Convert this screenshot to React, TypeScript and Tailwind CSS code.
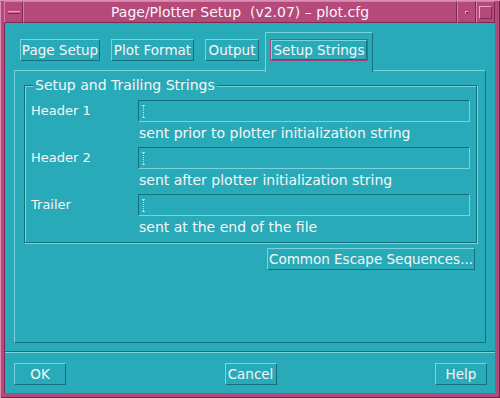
import React from "react";

const Bevel = ({ className = "", children }: { className?: string; children?: React.ReactNode }) => (
  <div
    className={`flex items-center justify-center border border-t-[#7ad4dd] border-l-[#7ad4dd] border-b-[#15707b] border-r-[#15707b] bg-[#29aab9] text-[13.5px] ${className}`}
  >
    {children}
  </div>
);

const Field = () => (
  <div className="flex h-[22px] items-center border border-t-[#15707b] border-l-[#15707b] border-b-[#7ad4dd] border-r-[#7ad4dd] bg-[#29aab9] pl-[3px]">
    <div className="flex flex-col items-center">
      <div className="h-[1px] w-[3px] bg-[#9fe0e6]" />
      <div className="h-[11px] w-0 border-l border-dotted border-[#b9eaee]" />
      <div className="h-[1px] w-[3px] bg-[#9fe0e6]" />
    </div>
  </div>
);

const rows = [
  { label: "Header 1", hint: "sent prior to plotter initialization string" },
  { label: "Header 2", hint: "sent after plotter initialization string" },
  { label: "Trailer", hint: "sent at the end of the file" },
];

export default function App() {
  return (
    <div className="flex h-[398px] w-[500px] flex-col bg-[#b5497a] pb-[5px] pl-[4px] pr-[5px] pt-[1px] font-['DejaVu_Sans',sans-serif] text-[13px] text-[#f6f6f6] shadow-[inset_1px_1px_0_#dc8fb3,inset_-1px_-1px_0_#6e2346]">
      {/* title bar */}
      <div className="flex h-[22px]">
        <div className="flex w-[19px] items-center justify-center border border-t-[#d680a8] border-l-[#d680a8] border-b-[#7d2a52] border-r-[#7d2a52]">
          <div className="h-[3px] w-[12px] border-t border-t-[#e6a6c4] border-b border-b-[#7d2a52] bg-[#c56690]" />
        </div>
        <div className="flex flex-1 items-center justify-center border border-t-[#d680a8] border-l-[#d680a8] border-b-[#7d2a52] border-r-[#7d2a52] text-[14px] whitespace-pre">
          Page/Plotter Setup  (v2.07) – plot.cfg
        </div>
        <div className="flex w-[19px] items-center justify-center border border-t-[#d680a8] border-l-[#d680a8] border-b-[#7d2a52] border-r-[#7d2a52]">
          <div className="h-[3px] w-[3px] border-t border-l border-t-[#e6a6c4] border-l-[#e6a6c4] bg-[#7d2a52]" />
        </div>
        <div className="flex w-[19px] items-center justify-center border border-t-[#d680a8] border-l-[#d680a8] border-b-[#7d2a52] border-r-[#7d2a52]">
          <div className="h-[13px] w-[13px] border border-t-[#e6a6c4] border-l-[#e6a6c4] border-b-[#7d2a52] border-r-[#7d2a52]" />
        </div>
      </div>

      {/* client area */}
      <div className="flex flex-1 flex-col border-l border-l-[#7d2a52] bg-[#29aab9]">
        {/* tabs */}
        <div className="ml-[15px] mt-[9px] flex h-[38px] items-start">
          <Bevel className="mt-[7px] h-[22px] w-[80px]">Page Setup</Bevel>
          <Bevel className="ml-[11px] mt-[7px] h-[22px] w-[83px]">Plot Format</Bevel>
          <Bevel className="ml-[11px] mt-[7px] h-[22px] w-[54px]">Output</Bevel>
          <div className="relative z-10 ml-[6px] h-[40px] w-[108px] border-l border-r border-t border-l-[#7ad4dd] border-t-[#7ad4dd] border-r-[#15707b] bg-[#29aab9] pl-[4px] pt-[6px]">
            <div className="h-[22px] w-[98px] border border-[#a8437a] bg-[#29aab9]">
              <Bevel className="h-full w-full">Setup Strings</Bevel>
            </div>
          </div>
        </div>

        {/* tab panel */}
        <div className="ml-[9px] flex h-[273px] w-[472px] flex-col border border-t-[#7ad4dd] border-l-[#7ad4dd] border-b-[#15707b] border-r-[#15707b]">
          <fieldset className="ml-[9px] mt-[6px] h-[166px] w-[452px] border border-[#15707b] px-[6px] shadow-[inset_1px_1px_0_#7ad4dd,1px_1px_0_#7ad4dd]">
            <legend className="ml-[2px] bg-[#29aab9] px-[2px] text-[14px] leading-[16px]">Setup and Trailing Strings</legend>
            <div className="mt-[7px] grid grid-cols-[107px_332px]">
              {rows.map((r) => (
                <React.Fragment key={r.label}>
                  <div className="flex h-[22px] items-center">{r.label}</div>
                  <Field />
                  <div />
                  <div className="h-[25px] pl-[1px] text-[14px] leading-[22px]">{r.hint}</div>
                </React.Fragment>
              ))}
            </div>
          </fieldset>
          <Bevel className="mr-[10px] mt-[5px] h-[22px] w-[208px] self-end">Common Escape Sequences...</Bevel>
        </div>

        {/* separator */}
        <div className="mt-[8px] h-[2px] border-t border-b border-t-[#15707b] border-b-[#7ad4dd]" />

        {/* buttons */}
        <div className="ml-[9px] mr-[8px] mt-[10px] flex justify-between">
          <Bevel className="h-[22px] w-[52px]">OK</Bevel>
          <Bevel className="h-[22px] w-[52px]">Cancel</Bevel>
          <Bevel className="h-[22px] w-[52px]">Help</Bevel>
        </div>
      </div>
    </div>
  );
}
